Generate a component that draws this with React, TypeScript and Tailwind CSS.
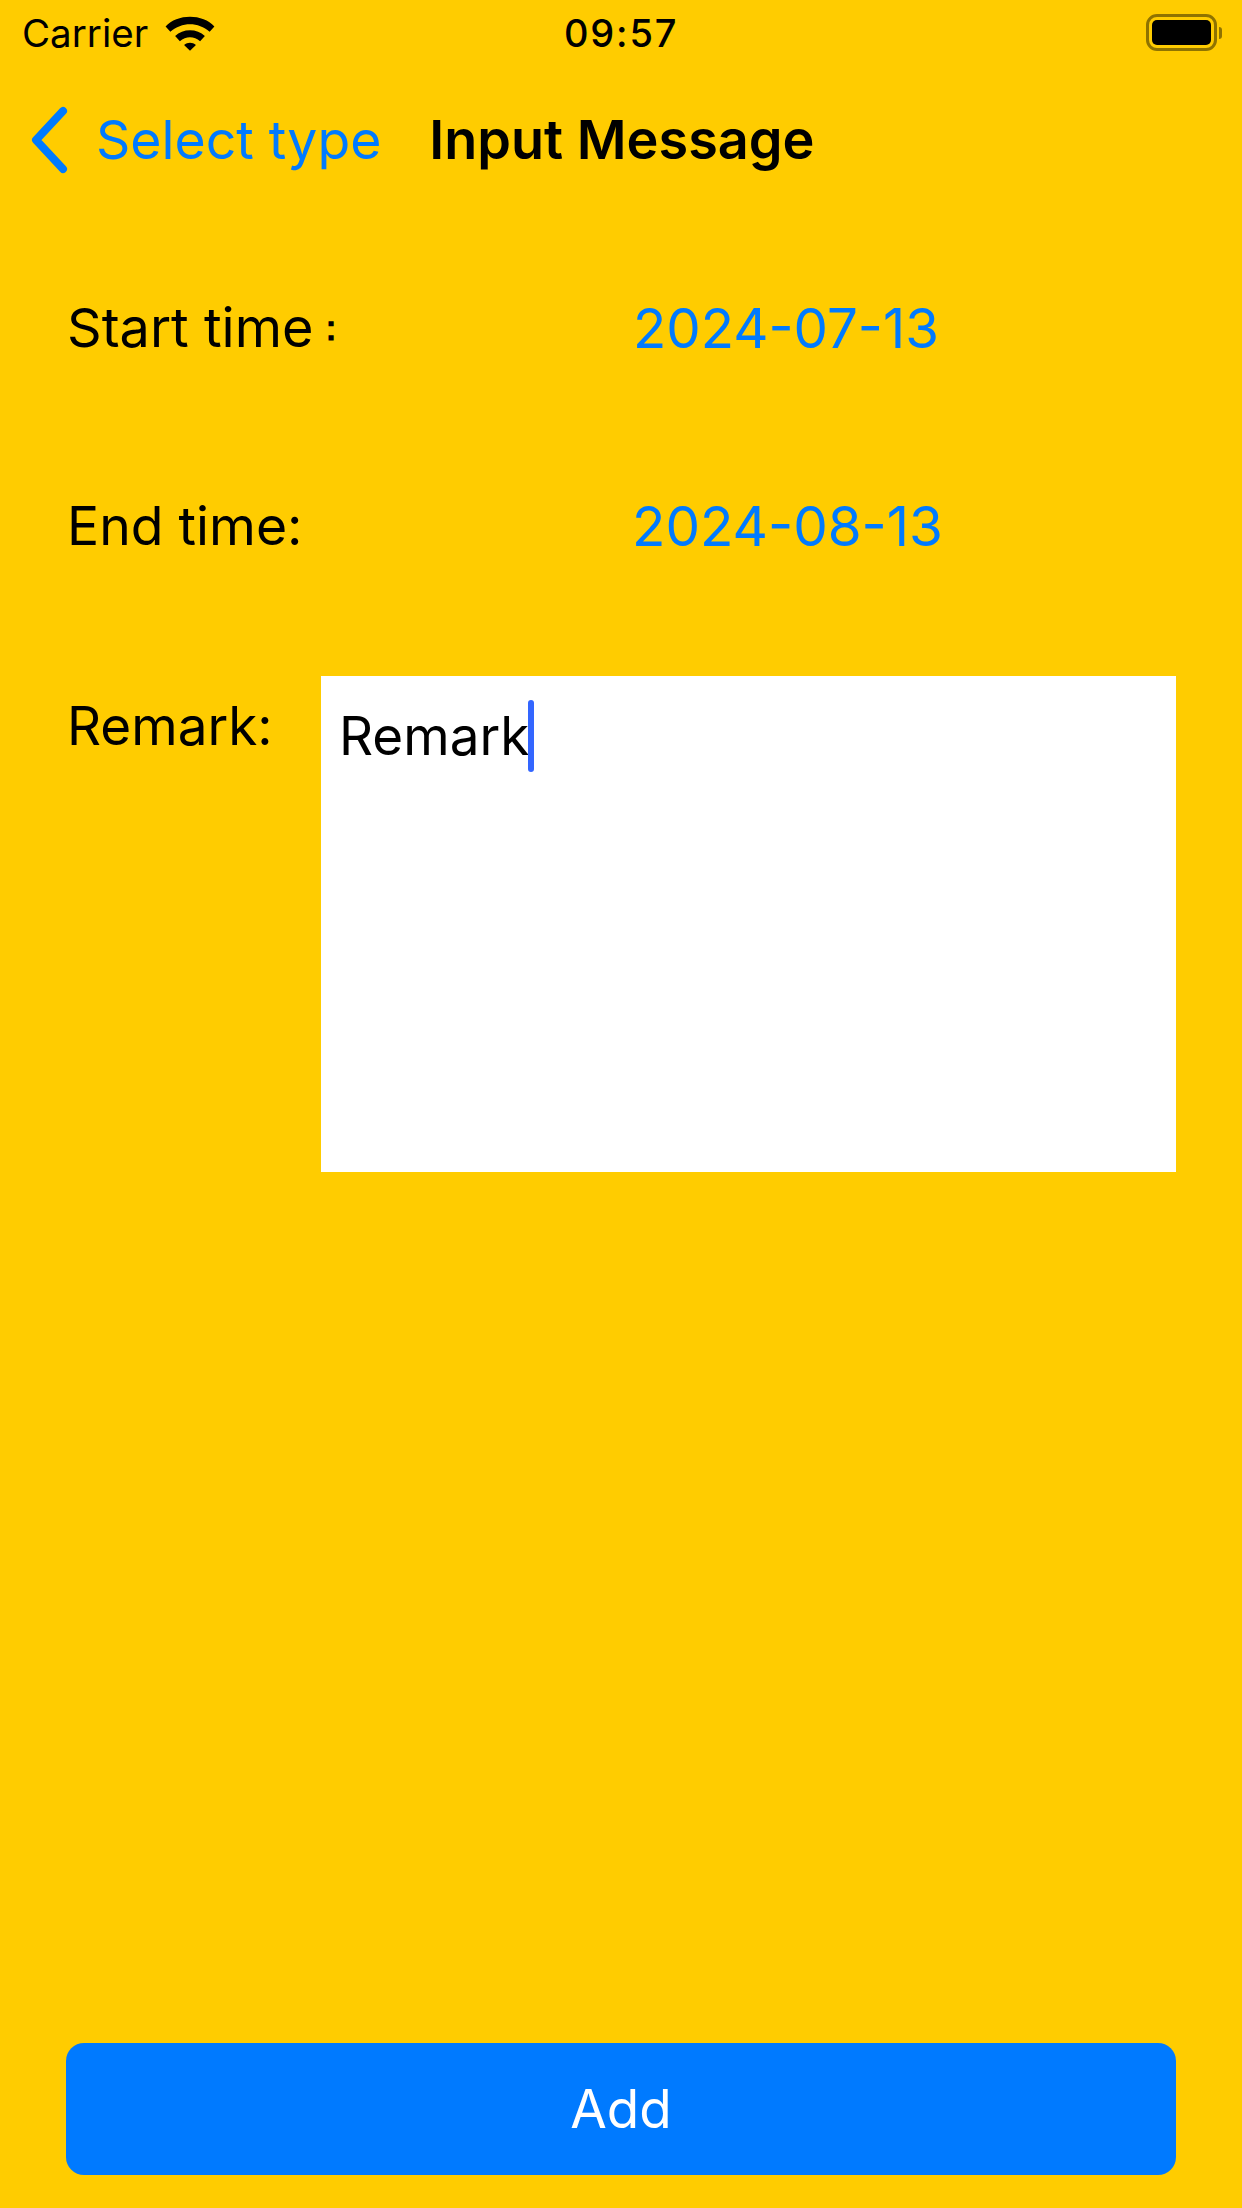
export default function App() {
  const font = { fontFamily: 'Inter, "Liberation Sans", sans-serif' };
  return (
    <div style={font} className="w-[1242px] h-[2208px] bg-[#ffcc00] flex flex-col overflow-hidden text-black">
      <div className="h-[66px] flex items-center relative px-[22px]">
        <span className="text-[38.5px] leading-[60px]">Carrier</span>
        <svg className="ml-[17px]" width="50" height="36" viewBox="0 0 42 30">
          <path d="M0.5 9.5 C 10 -1.5, 32 -1.5, 41.5 9.5 L 37.5 14 C 28 5.5, 14 5.5, 4.5 14 Z" fill="#000" />
          <path d="M8.5 17.5 C 15 11, 27 11, 33.5 17.5 L 29.5 22 C 24.5 17.5, 17.5 17.5, 12.5 22 Z" fill="#000" />
          <path d="M16 25 C 19 22.5, 23 22.5, 26 25 L 21 30 Z" fill="#000" />
        </svg>
        <span className="absolute left-[564px] text-[38px] leading-[66px] font-medium tracking-[1.8px]">09:57</span>
        <div className="absolute left-[1146px] top-[14px] flex items-center">
          <div className="w-[71px] h-[37px] rounded-[11px] border-[3px] border-[#8f7300] p-[3px]">
            <div className="w-full h-full rounded-[5px] bg-black" />
          </div>
          <div className="w-[3px] h-[12px] ml-[2px] rounded-r-full bg-[#8f7300]" />
        </div>
      </div>
      <div className="h-[148px] flex items-center">
        <svg className="ml-[29px]" width="42" height="68" viewBox="0 0 42 68">
          <path d="M34 5 L7 34 L34 63" fill="none" stroke="#007aff" strokeWidth="8" strokeLinecap="round" strokeLinejoin="round" />
        </svg>
        <span className="ml-[25px] text-[53.5px] leading-[60px] text-[#007aff]">Select type</span>
        <span className="ml-[48px] text-[54px] leading-[60px] font-semibold">Input Message</span>
      </div>
      <div className="pl-[67px] pr-[66px] flex flex-col">
        <div className="h-[70px] mt-[79px] flex items-center">
          <span className="w-[254px] text-[54px] leading-[70px] whitespace-nowrap">Start time<span className="relative -top-[7px] text-[36px] leading-none font-bold">：</span></span>
          <span className="ml-[312px] text-[54.6px] leading-[70px] text-[#007aff]">2024-07-13</span>
        </div>
        <div className="h-[70px] mt-[128px] flex items-center">
          <span className="w-[254px] text-[53.5px] leading-[70px]">End time:</span>
          <span className="ml-[311px] text-[54.8px] leading-[70px] text-[#007aff]">2024-08-13</span>
        </div>
        <div className="mt-[115px] flex items-start">
          <span className="w-[254px] pt-[15px] text-[53px] leading-[70px]">Remark:</span>
          <div className="flex-1 h-[496px] bg-white pl-[18px] pt-[25px] flex items-start">
            <span className="text-[53px] leading-[70px]">Remark</span>
            <div className="w-[6px] h-[72px] rounded-full bg-[#3366ff] -ml-[1px] -mt-[1px]" />
          </div>
        </div>
      </div>
      <div className="mt-auto mb-[33px] mx-[66px] h-[132px] rounded-[18px] bg-[#007aff] flex items-center justify-center">
        <span className="text-[53px] leading-[70px] text-white">Add</span>
      </div>
    </div>
  );
}
